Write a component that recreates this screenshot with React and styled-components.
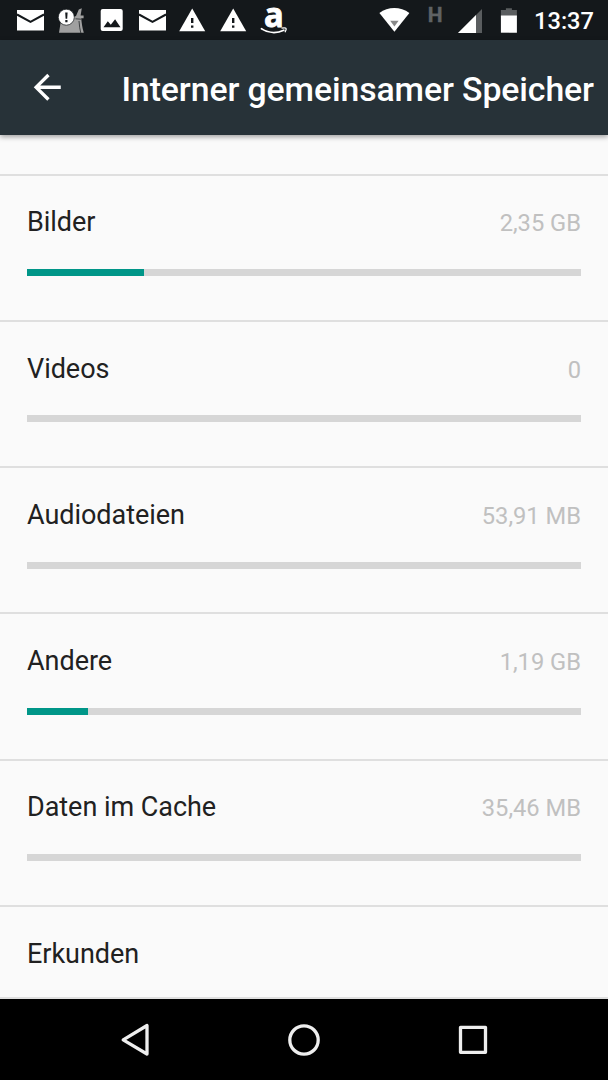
import React from 'react';
import styled, { createGlobalStyle } from 'styled-components';

const Global = createGlobalStyle`
  * { box-sizing: border-box; }
  html, body { margin: 0; background: #fafafa; overflow: hidden; }
  body { font-family: Roboto, "Liberation Sans", sans-serif; }
`;

const Screen = styled.div`
  display: flex;
  flex-direction: column;
  width: 608px;
  height: 1080px;
  overflow: hidden;
  background: #fafafa;
`;

const StatusBar = styled.div`
  display: flex;
  flex: none;
  justify-content: space-between;
  height: 40px;
  background: #14181b;
`;

const Notifications = styled.div`
  display: flex;
  gap: 0.5px;
  padding-left: 10px;
`;

const SystemIcons = styled.div`
  display: flex;
  padding-right: 14px;
`;

const StatusIcon = styled.svg`
  display: block;
  flex: none;
  width: ${(p) => p.$width || 40}px;
  height: 40px;
  overflow: visible;
`;

const AppGlyph = styled.text`
  font: bold 34px "Open Sans", sans-serif;
  fill: #fff;
`;

const NetworkGlyph = styled.text`
  font: bold 21px Roboto, sans-serif;
  fill: #5f6264;
`;

const Clock = styled.time`
  width: 60px;
  text-align: right;
  white-space: nowrap;
  font-size: 23.65px;
  font-weight: 500;
  line-height: 42px;
  color: #fff;
`;

const AppBar = styled.header`
  position: relative;
  display: flex;
  flex: none;
  align-items: center;
  height: 95px;
  padding-left: 27px;
  background: #273238;
  box-shadow: 0 2px 5px rgba(0, 0, 0, 0.36);
`;

const BackButton = styled.button`
  display: flex;
  width: 94.5px;
  padding: 0;
  border: 0;
  background: none;
`;

const Title = styled.h1`
  margin: 0;
  padding-top: 4px;
  white-space: nowrap;
  font-size: 33.8px;
  font-weight: 500;
  letter-spacing: -0.1px;
  line-height: 40px;
  color: #fff;
`;

const List = styled.main`
  display: flex;
  flex: 1;
  flex-direction: column;
  min-height: 0;
  overflow: hidden;
`;

const ListTop = styled.div`
  flex: none;
  height: 40.6px;
  border-bottom: 2px solid #dfdfdf;
`;

const Row = styled.section`
  flex: none;
  height: ${(p) => (p.$compact ? 92.1 : 146.25)}px;
  padding: 30.8px 27px 0;
  border-bottom: 2px solid #dfdfdf;
`;

const RowHead = styled.div`
  display: flex;
  justify-content: space-between;
  align-items: baseline;
  height: 32px;
  line-height: 32px;
`;

const Label = styled.span`
  font-size: 27px;
  letter-spacing: -0.04px;
  color: #212121;
`;

const Value = styled.span`
  font-size: 23.7px;
  color: #c0c0c0;
`;

const Track = styled.div`
  height: 7px;
  margin-top: 30.8px;
  background: #d6d6d6;
`;

const Fill = styled.div`
  height: 100%;
  background: #009688;
`;

const NavBar = styled.nav`
  display: flex;
  flex: none;
  justify-content: center;
  align-items: center;
  gap: 129px;
  height: 81px;
  background: #000;
`;

const NavIcon = styled.svg`
  display: block;
  width: 40px;
  height: 40px;
  fill: none;
  stroke: #eee;
  stroke-width: 3.3;
  stroke-linejoin: round;
`;

const Mail = () => (
  <StatusIcon viewBox="0 0 40 40">
    <path fill="#fff" d="M7 10h27v20.5H7z" />
    <path fill="none" stroke="#14181b" strokeWidth="2" d="M7 14.5l13.5 7.3L34 14.5" />
  </StatusIcon>
);

const Cleaner = () => (
  <StatusIcon viewBox="0 0 40 40">
    <path fill="#a0a0a0" d="M21 17.5l4-1.5L27.800 9.500l3-1.200-1.200 7.200h3v2.800h-2.400c.6 5 1 9.500 2.600 14.500H8l1.600-10z" />
    <path fill="none" stroke="#14181b" strokeWidth="0.7" d="M24.500 18.800l5.500.4M28 21q.5 7 1.800 12" />
    <circle cx="15.3" cy="17.2" r="8" fill="#fff" stroke="#14181b" strokeWidth="0.7" />
    <path fill="#14181b" d="M14.200 12.500h2.400l-.4 6.200h-1.600zM14.300 20h2.200v2.200h-2.200z" />
  </StatusIcon>
);

const Picture = () => (
  <StatusIcon viewBox="0 0 40 40">
    <rect x="9.7" y="9" width="22" height="22" rx="2" fill="#fff" />
    <path fill="#14181b" d="M12.5 27.3l4.3-6 3 3.5 4.3-5.5 5.4 8z" />
  </StatusIcon>
);

const Warning = () => (
  <StatusIcon viewBox="0 0 40 40">
    <path fill="#fff" d="M20.2 8.5L33.200 31.300h-26z" />
    <path fill="#14181b" d="M19 18h2.400v5H19zM19 25.400h2.400v2.400H19z" />
  </StatusIcon>
);

const Shop = () => (
  <StatusIcon viewBox="0 0 40 40">
    <AppGlyph transform="translate(11 27) scale(0.96 1)" stroke="#fff" strokeWidth="0.9">a</AppGlyph>
    <path fill="none" stroke="#fff" strokeWidth="1.8" strokeLinecap="round" d="M8.500 28.800c7 4.600 15.600 4.700 22.300 1.400" />
    <path fill="none" stroke="#fff" strokeWidth="1.3" d="M28.500 28.200c5.400-1 5.600.3 3.500 4" />
  </StatusIcon>
);

const Wifi = () => (
  <StatusIcon viewBox="0 0 40 40">
    <path fill="#fff" d="M-.6 13C8 6.3 20.500 6.300 29.400 13L14.400 31.700z" />
    <path fill="#888" d="M10.200 20.700h8.400l-4.200 5.800z" />
  </StatusIcon>
);

const NetworkType = () => (
  <StatusIcon viewBox="0 0 34 40" $width={34}>
    <NetworkGlyph x="7.7" y="22" stroke="#5f6264" strokeWidth="0.4">H</NetworkGlyph>
  </StatusIcon>
);

const Signal = () => (
  <StatusIcon viewBox="0 0 40 40">
    <path fill="#5a5d5f" d="M28 9v24H4z" />
    <path fill="#fff" d="M22 15v18H4z" />
  </StatusIcon>
);

const Battery = () => (
  <StatusIcon viewBox="0 0 40 40">
    <path fill="#5a5d5f" d="M11.900 8.200h6V10h5v7h-16v-7h5z" />
    <path fill="#fff" d="M6.900 15.500h16v17.200h-16z" />
  </StatusIcon>
);

const items = [
  { label: 'Bilder', value: '2,35 GB', percent: 21.1 },
  { label: 'Videos', value: '0', percent: 0 },
  { label: 'Audiodateien', value: '53,91 MB', percent: 0 },
  { label: 'Andere', value: '1,19 GB', percent: 11.1 },
  { label: 'Daten im Cache', value: '35,46 MB', percent: 0 },
];

export default function App() {
  return (
    <>
      <Global />
      <Screen>
        <StatusBar>
          <Notifications>
            <Mail />
            <Cleaner />
            <Picture />
            <Mail />
            <Warning />
            <Warning />
            <Shop />
          </Notifications>
          <SystemIcons>
            <Wifi />
            <NetworkType />
            <Signal />
            <Battery />
            <Clock>13:37</Clock>
          </SystemIcons>
        </StatusBar>
        <AppBar>
          <BackButton aria-label="Zurück">
            <svg width="40.5" height="40.5" viewBox="0 0 24 24" fill="#fff">
              <path d="M20 11H7.83l5.59-5.59L12 4l-8 8 8 8 1.41-1.41L7.83 13H20v-2z" />
            </svg>
          </BackButton>
          <Title>Interner gemeinsamer Speicher</Title>
        </AppBar>
        <List>
          <ListTop />
          {items.map((item) => (
            <Row key={item.label}>
              <RowHead>
                <Label>{item.label}</Label>
                <Value>{item.value}</Value>
              </RowHead>
              <Track>
                <Fill style={{ width: `${item.percent}%` }} />
              </Track>
            </Row>
          ))}
          <Row $compact>
            <RowHead>
              <Label>Erkunden</Label>
            </RowHead>
          </Row>
        </List>
        <NavBar>
          <NavIcon viewBox="0 0 40 40">
            <path d="M32 5.5v28.500L8.200 19.800z" />
          </NavIcon>
          <NavIcon viewBox="0 0 40 40">
            <circle cx="20" cy="20" r="14.2" />
          </NavIcon>
          <NavIcon viewBox="0 0 40 40">
            <rect x="7.5" y="7.300" width="25" height="25" />
          </NavIcon>
        </NavBar>
      </Screen>
    </>
  );
}
